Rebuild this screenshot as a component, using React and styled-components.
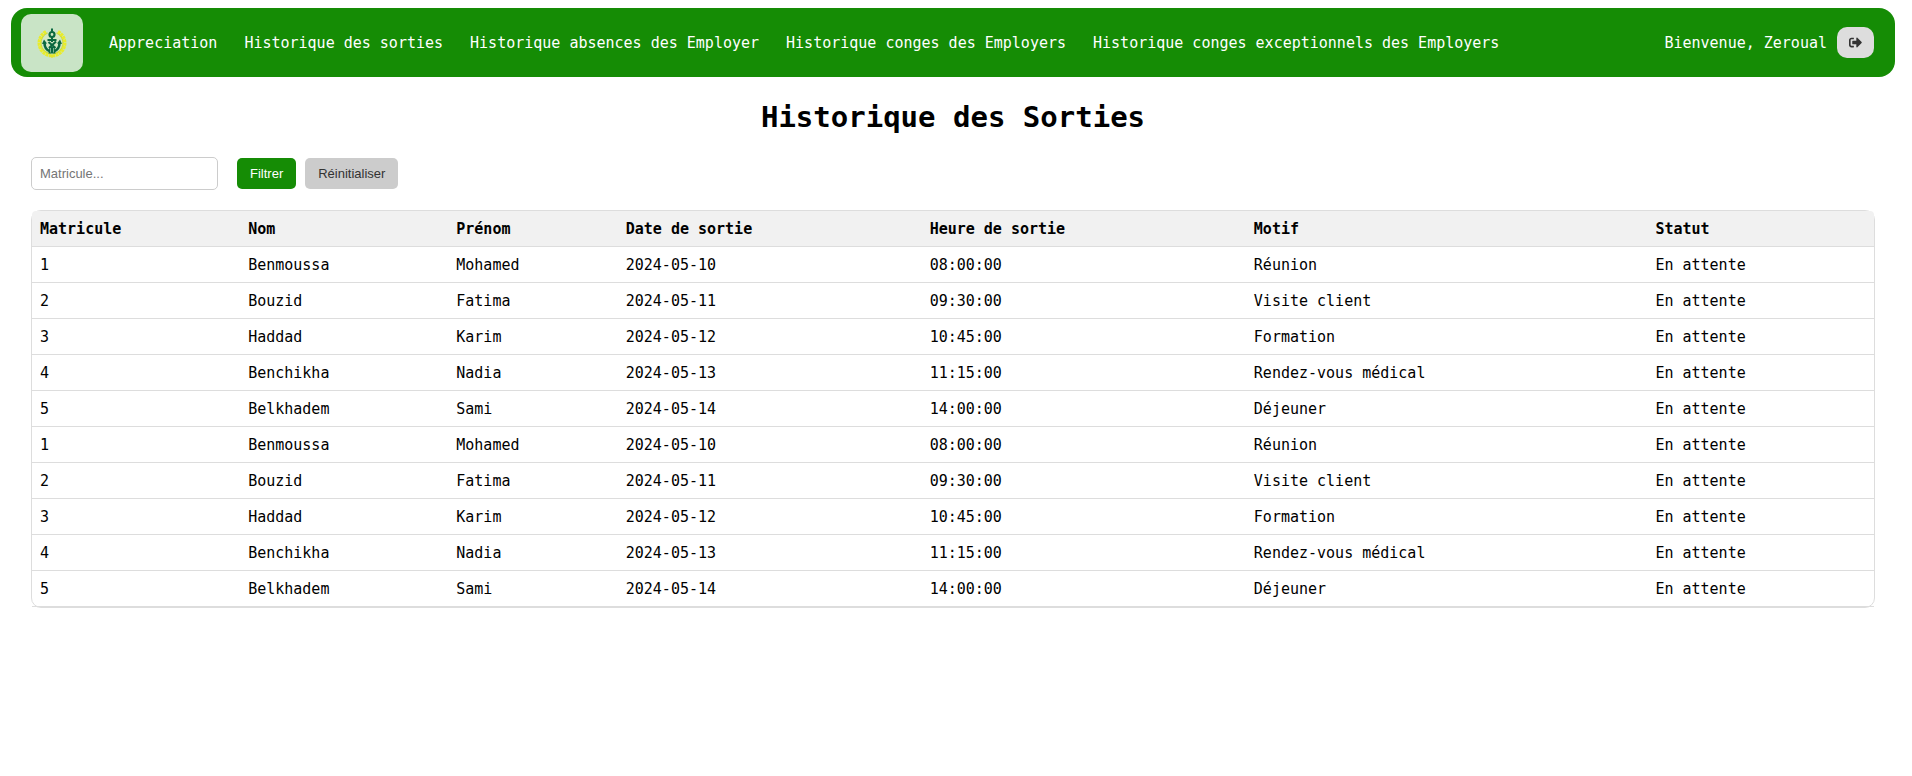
import React, { useState } from 'react';
import styled, { createGlobalStyle } from 'styled-components';
import { FaSignOutAlt } from 'react-icons/fa';

const GlobalStyle = createGlobalStyle`
  *, *::before, *::after { box-sizing: border-box; }
  body {
    margin: 0;
    background: #fff;
    color: #000;
    font: 15px/19px Consolas, "DejaVu Sans Mono", monospace;
  }
`;

const Page = styled.div`
  padding: 8px 17px 8px 11px;
`;

const Navbar = styled.header`
  display: flex;
  align-items: center;
  gap: 26px;
  min-height: 69px;
  padding: 0 21px 0 10px;
  border-radius: 16px;
  background: #158c05;
  color: #fff;
`;

const LogoLink = styled.a`
  display: flex;
  align-items: center;
  justify-content: center;
  width: 62px;
  height: 58px;
  border-radius: 10px;
  background: #c9e4c6;
`;

const NavLinks = styled.nav`
  display: flex;
  flex: 1;
  gap: 27px;
  padding-top: 2px;
`;

const NavLink = styled.a`
  color: inherit;
  text-decoration: none;
  white-space: nowrap;
`;

const UserArea = styled.div`
  display: flex;
  align-items: center;
  gap: 10px;
  white-space: nowrap;
`;

const UserName = styled.span`
  padding-top: 2px;
`;

const LogoutButton = styled.button`
  display: flex;
  align-items: center;
  justify-content: center;
  width: 37px;
  height: 31px;
  padding: 0;
  border: 0;
  border-radius: 10px;
  background: #ddd;
  color: #333;
  font-size: 13px;
  cursor: pointer;
`;

const Main = styled.main`
  padding: 20px;
`;

const Title = styled.h1`
  margin: 0 0 20px;
  font-size: 29px;
  line-height: 40px;
  text-align: center;
`;

const Filters = styled.form`
  display: flex;
  align-items: center;
  gap: 9px;
  margin-bottom: 20px;
`;

const FilterInput = styled.input`
  width: 187px;
  height: 33px;
  margin-right: 10px;
  padding: 0 8px;
  border: 1px solid #ccc;
  border-radius: 5px;
  background: #fff;
  font: 13px "Liberation Sans", Arial, sans-serif;

  &::placeholder { color: #757575; }
`;

const FilterButton = styled.button`
  height: 31px;
  padding: 0 13px;
  border: 0;
  border-radius: 5px;
  background: ${(p) => (p.$primary ? '#158c05' : '#ccc')};
  color: ${(p) => (p.$primary ? '#fff' : '#333')};
  font: 13px "Liberation Sans", Arial, sans-serif;
  cursor: pointer;
`;

const Table = styled.table`
  width: 100%;
  table-layout: fixed;
  border: 1px solid #ddd;
  border-radius: 10px;
  border-spacing: 0;
  background: #fff;
`;

const Column = styled.col`
  width: ${(p) => p.$width};
`;

const HeadCell = styled.th`
  height: 36px;
  padding: 2px 8px 0;
  border-bottom: 1px solid #ddd;
  background: #f1f1f1;
  text-align: left;

  &:first-child { border-top-left-radius: 4px; }
  &:last-child { border-top-right-radius: 4px; }
`;

const Cell = styled.td`
  height: 36px;
  padding: 2px 8px 0;
  border-bottom: 1px solid #ddd;
`;

const links = [
  'Appreciation',
  'Historique des sorties',
  'Historique absences des Employer',
  'Historique conges des Employers',
  'Historique conges exceptionnels des Employers',
];

const columns = [
  ['Matricule', '11.3%'],
  ['Nom', '11.3%'],
  ['Prénom', '9.2%'],
  ['Date de sortie', '16.5%'],
  ['Heure de sortie', '17.6%'],
  ['Motif', '21.8%'],
  ['Statut', '12.3%'],
];

const exits = [
  ['1', 'Benmoussa', 'Mohamed', '2024-05-10', '08:00:00', 'Réunion', 'En attente'],
  ['2', 'Bouzid', 'Fatima', '2024-05-11', '09:30:00', 'Visite client', 'En attente'],
  ['3', 'Haddad', 'Karim', '2024-05-12', '10:45:00', 'Formation', 'En attente'],
  ['4', 'Benchikha', 'Nadia', '2024-05-13', '11:15:00', 'Rendez-vous médical', 'En attente'],
  ['5', 'Belkhadem', 'Sami', '2024-05-14', '14:00:00', 'Déjeuner', 'En attente'],
];
const rows = [...exits, ...exits];

function Logo() {
  return (
    <svg width="30" height="30" viewBox="0 0 30 30" fill="none" aria-hidden="true">
      <circle cx="15" cy="15" r="11" fill="#d3e8c4" />
      <path d="M10.500 4.900A11 11 0 0 0 14 26M19.500 4.900A11 11 0 0 1 16 26" stroke="#c3d84a" strokeWidth="1.500" />
      <path d="M9 3.700A12.800 12.800 0 0 0 13.500 27.700M21 3.700A12.800 12.800 0 0 1 16.500 27.700" stroke="#e9ec2a" strokeWidth="3.400" strokeDasharray="2.800 .6" />
      <path d="M12 28l3-2 3 2-3 2z" fill="#e3e52b" />
      <circle cx="15" cy="6.500" r="2.500" stroke="#0b6840" strokeWidth="2.200" />
      <path d="M15 .5v3M15 9v5" stroke="#0b6840" strokeWidth="2" />
      <path d="M10.500 12h9M11.500 14l7 6M19 13.500l-7 6.500" stroke="#0b6840" strokeWidth="2.200" />
      <path d="M7.500 15c0 5 3 7.500 6 8.500M22.500 15c0 5-3 7.500-6 8.500" stroke="#0b6840" strokeWidth="2.600" />
      <path d="M5 16l2-4.500 3 4zM25 16l-2-4.500-3 4zM11.500 25.500l1-6.500h5l1 6.500z" fill="#0b6840" />
      <path d="M13.500 20v4.500M16.500 20v4.500" stroke="#c9e4c6" strokeWidth=".6" />
    </svg>
  );
}

export default function App() {
  const [query, setQuery] = useState('');
  const [filter, setFilter] = useState('');
  const visible = filter ? rows.filter((r) => r[0] === filter) : rows;

  return (
    <Page>
      <GlobalStyle />
      <Navbar>
        <LogoLink href="#" aria-label="Accueil"><Logo /></LogoLink>
        <NavLinks>
          {links.map((label) => <NavLink key={label} href="#">{label}</NavLink>)}
        </NavLinks>
        <UserArea>
          <UserName>Bienvenue, Zeroual</UserName>
          <LogoutButton type="button" aria-label="Déconnexion"><FaSignOutAlt /></LogoutButton>
        </UserArea>
      </Navbar>
      <Main>
        <Title>Historique des Sorties</Title>
        <Filters onSubmit={(e) => { e.preventDefault(); setFilter(query.trim()); }}>
          <FilterInput
            aria-label="Matricule"
            placeholder="Matricule..."
            value={query}
            onChange={(e) => setQuery(e.target.value)}
          />
          <FilterButton $primary type="submit">Filtrer</FilterButton>
          <FilterButton type="button" onClick={() => { setQuery(''); setFilter(''); }}>Réinitialiser</FilterButton>
        </Filters>
        <Table>
          <colgroup>
            {columns.map(([name, width]) => <Column key={name} $width={width} />)}
          </colgroup>
          <thead>
            <tr>{columns.map(([name]) => <HeadCell key={name} scope="col">{name}</HeadCell>)}</tr>
          </thead>
          <tbody>
            {visible.map((row, i) => (
              <tr key={i}>{row.map((value, j) => <Cell key={j}>{value}</Cell>)}</tr>
            ))}
          </tbody>
        </Table>
      </Main>
    </Page>
  );
}
